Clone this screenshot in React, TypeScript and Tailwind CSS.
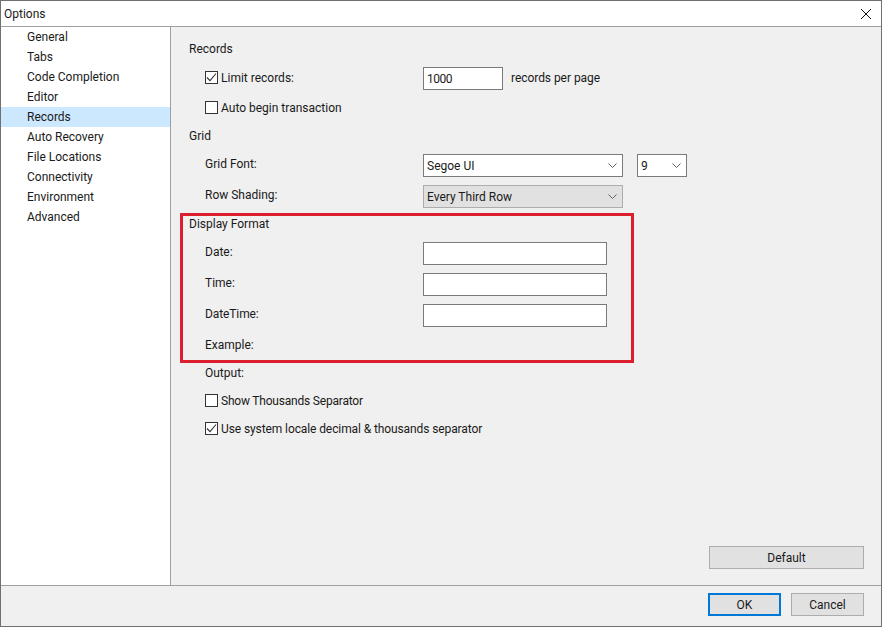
import type { ReactNode } from 'react';

const FONT = "font-['Roboto','Open_Sans',sans-serif]";
const NAV = ['General', 'Tabs', 'Code Completion', 'Editor', 'Records', 'Auto Recovery', 'File Locations', 'Connectivity', 'Environment', 'Advanced'];

function Chevron() {
  return (
    <svg width="9" height="5" viewBox="0 0 9 5" fill="none" stroke="#606060" className="shrink-0">
      <path d="M0.5 0.5 L4.5 4.5 L8.5 0.5" />
    </svg>
  );
}

function Checkbox({ checked, label, className }: { checked?: boolean; label: string; className: string }) {
  return (
    <div className={`flex h-[23px] items-center pl-4 ${className}`}>
      <span className="flex h-[13px] w-[13px] items-center justify-center border border-[#333] bg-white">
        {checked && (
          <svg width="11" height="11" viewBox="0 0 11 11" fill="none" stroke="#333" strokeWidth="1.1">
            <path d="M1 5.5 L4 8.7 L10 1.5" />
          </svg>
        )}
      </span>
      <span className="ml-[3px]">{label}</span>
    </div>
  );
}

function Field({ label, className, children }: { label: string; className: string; children?: ReactNode }) {
  return (
    <div className={`flex h-[23px] items-center pl-4 ${className}`}>
      <span className={`w-[218px] shrink-0 ${children ? 'pb-[3px]' : ''}`}>{label}</span>
      {children}
    </div>
  );
}

function TextBox({ value, width }: { value?: string; width: string }) {
  return (
    <div className={`flex h-[23px] items-center border border-[#7a7a7a] bg-white pl-[3px] ${width}`}>{value}</div>
  );
}

function Combo({ value, className }: { value: string; className: string }) {
  return (
    <div className={`flex h-[23px] items-center justify-between border pr-[5px] ${className}`}>
      <span>{value}</span>
      <Chevron />
    </div>
  );
}

export default function App() {
  return (
    <div className={`relative flex h-[627px] w-[882px] flex-col border border-[#707070] bg-[#f0f0f0] text-[12px] text-[#1a1a1a] ${FONT}`}>
      <div className="flex h-[26px] shrink-0 items-center justify-between border-b border-[#a0a0a0] bg-white pl-[3px] pr-[10px]">
        <span>Options</span>
        <svg width="10" height="10" viewBox="0 0 10 10" stroke="#111" fill="none">
          <path d="M0 0 L10 10 M10 0 L0 10" />
        </svg>
      </div>

      <div className="flex min-h-0 flex-1">
        <div className="w-[170px] shrink-0 border-r border-[#a0a0a0] bg-white">
          {NAV.map((item) => (
            <div key={item} className={`flex h-5 items-center pl-[26px] ${item === 'Records' ? 'bg-[#cce8ff]' : ''}`}>
              {item}
            </div>
          ))}
        </div>

        <div className="flex flex-1 flex-col pl-[18px] pt-[12px]">
          <div className="flex h-5 items-center">Records</div>
          <div className="mt-[8px] flex h-[23px] items-center">
            <Checkbox checked label="Limit records:" className="w-[234px] pb-[2px]" />
            <TextBox value="1000" width="w-20 tracking-[-0.5px]" />
            <span className="ml-2 pb-[2px] tracking-[-0.05px]">records per page</span>
          </div>
          <Checkbox label="Auto begin transaction" className="mt-[6px]" />
          <div className="mt-[7px] flex h-5 items-center">Grid</div>
          <Field label="Grid Font:" className="mt-[8px]">
            <Combo value="Segoe UI" className="w-[200px] border-[#7a7a7a] bg-white pl-[3px]" />
            <Combo value="9" className="ml-[14px] w-[50px] border-[#7a7a7a] bg-white pl-[3px]" />
          </Field>
          <Field label="Row Shading:" className="mt-2">
            <Combo value="Every Third Row" className="w-[200px] border-[#adadad] bg-[#e1e1e1] pl-[3px]" />
          </Field>
          <div className="mt-[6px] flex h-5 items-center">Display Format</div>
          <Field label="Date:" className="mt-2">
            <TextBox width="w-[184px]" />
          </Field>
          <Field label="Time:" className="mt-2">
            <TextBox width="w-[184px]" />
          </Field>
          <Field label="DateTime:" className="mt-2 tracking-[-0.1px]">
            <TextBox width="w-[184px]" />
          </Field>
          <Field label="Example:" className="mt-[6px]" />
          <Field label="Output:" className="mt-[5px]" />
          <Checkbox label="Show Thousands Separator" className="mt-[5px] tracking-[-0.2px]" />
          <Checkbox checked label="Use system locale decimal & thousands separator" className="mt-[5px] tracking-[-0.1px]" />
          <div className="mb-4 mr-[17px] mt-auto flex justify-end">
            <button type="button" className="h-[23px] w-[155px] border border-[#adadad] bg-[#e1e1e1]">
              Default
            </button>
          </div>
        </div>
      </div>

      <div className="flex h-[41px] shrink-0 items-start justify-end gap-[10px] border-t border-[#a0a0a0] pr-[17px] pt-[7px]">
        <button type="button" className="h-[23px] w-[73px] border-2 border-[#0078d7] bg-[#e1e1e1]">
          OK
        </button>
        <button type="button" className="h-[23px] w-[73px] border border-[#adadad] bg-[#e1e1e1]">
          Cancel
        </button>
      </div>

      <div className="absolute left-[179px] top-[212px] h-[150px] w-[454px] border-[3px] border-[#dc1f2e]" />
    </div>
  );
}
